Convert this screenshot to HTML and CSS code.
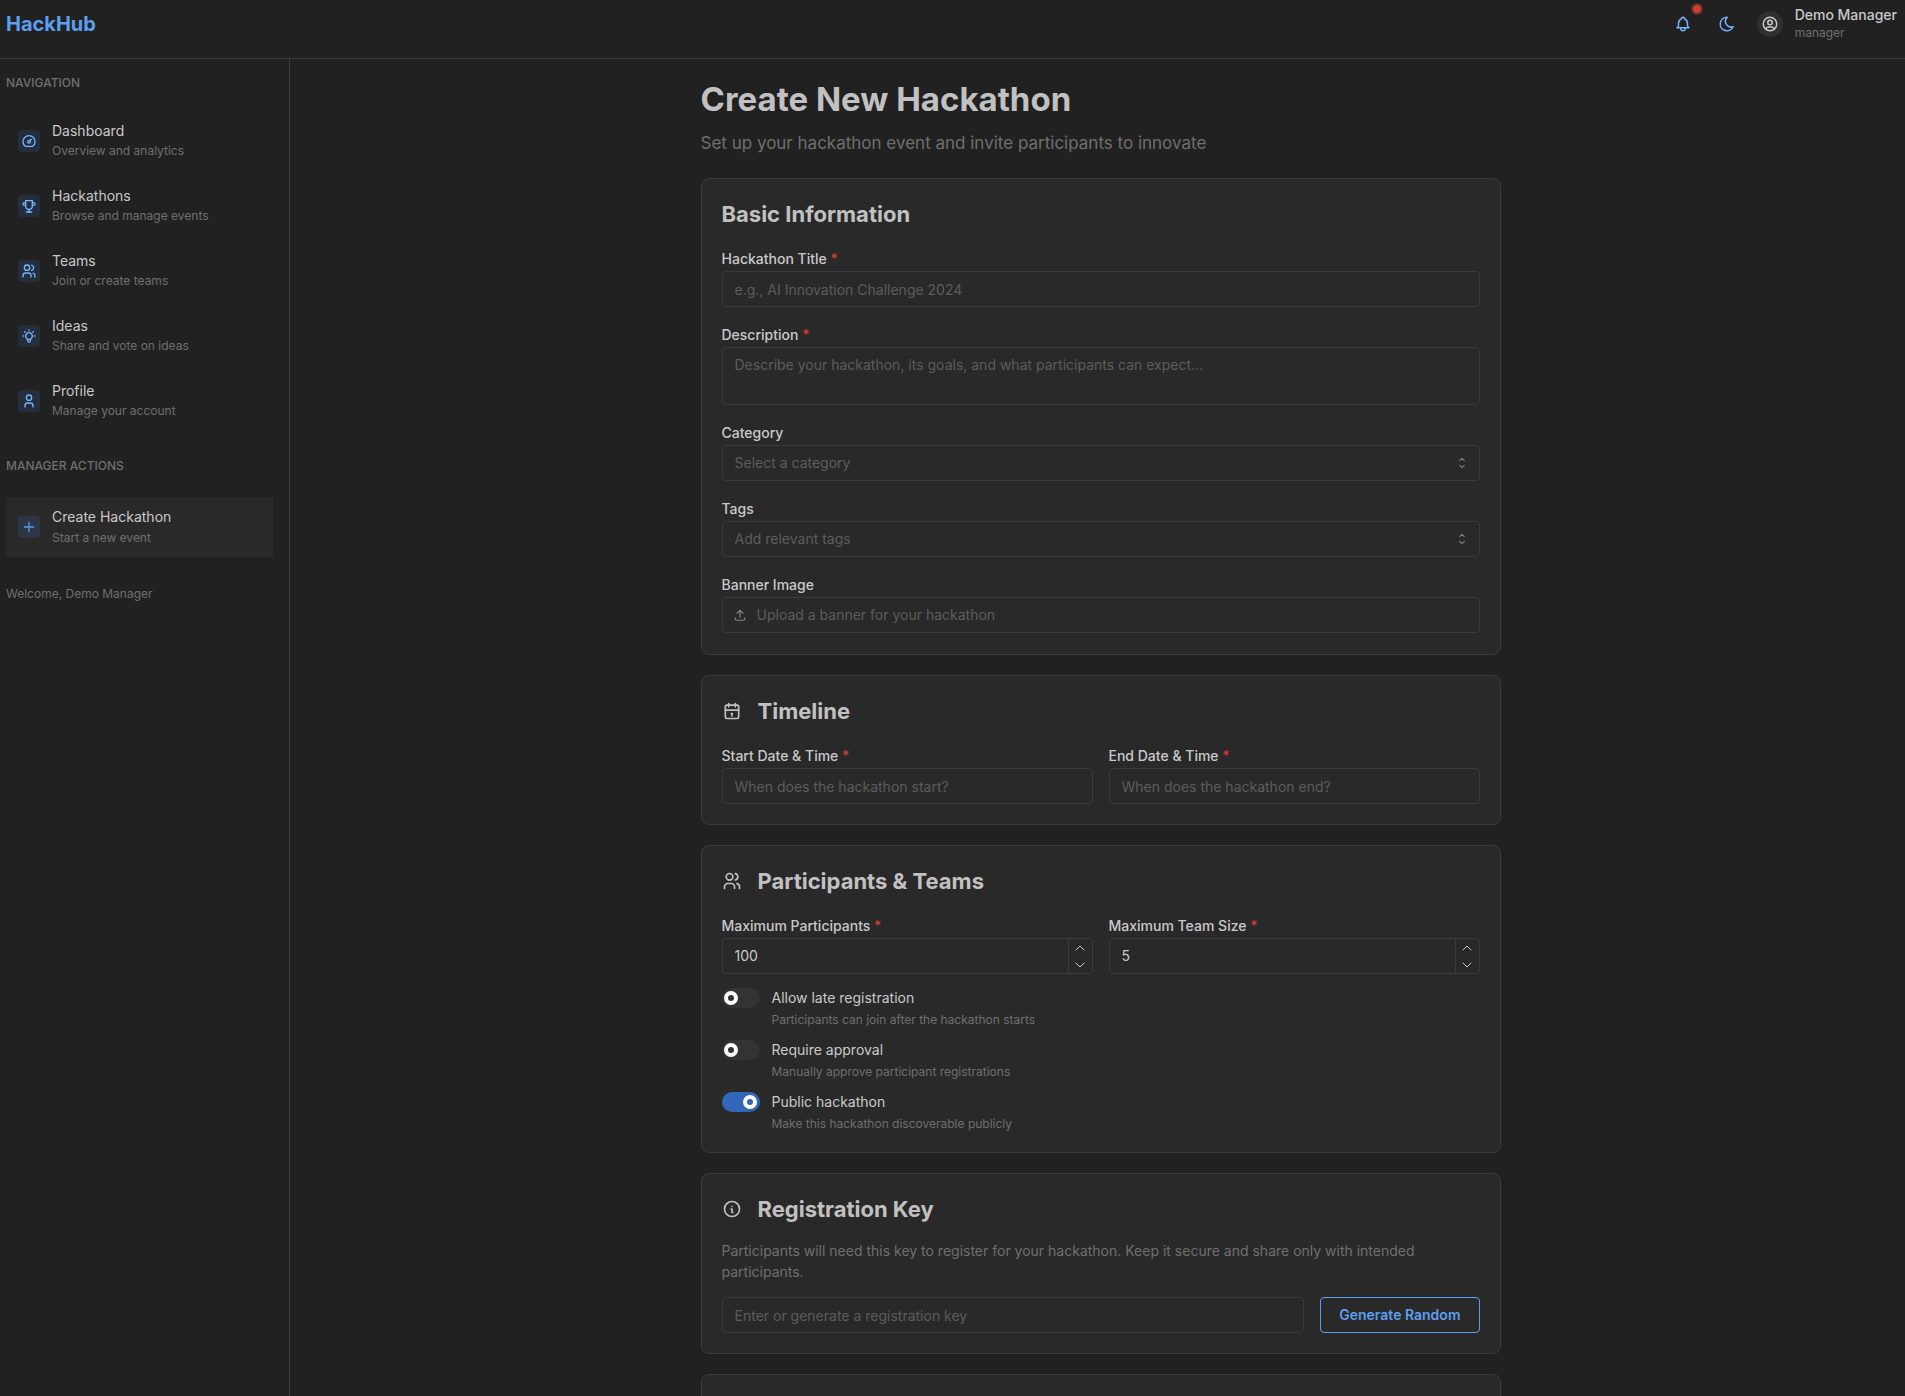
FILE: index.html
```html
<!DOCTYPE html>
<html lang="en">
<head>
<meta charset="utf-8">
<meta name="viewport" content="width=device-width, initial-scale=1">
<title>Create New Hackathon - HackHub</title>
<link rel="stylesheet" href="styles.css">
</head>
<body>
<svg class="sprite" aria-hidden="true">
  <symbol id="bell" viewBox="0 0 24 24"><path d="M10 5a2 2 0 1 1 4 0a7 7 0 0 1 4 6v3a4 4 0 0 0 2 3h-16a4 4 0 0 0 2 -3v-3a7 7 0 0 1 4 -6"/><path d="M9 17v1a3 3 0 0 0 6 0v-1"/></symbol>
  <symbol id="moon" viewBox="0 0 24 24"><path d="M12 3c.132 0 .263 0 .393 0a7.5 7.5 0 0 0 7.92 12.446a9 9 0 1 1 -8.313 -12.454z"/></symbol>
  <symbol id="user-circle" viewBox="0 0 24 24"><circle cx="12" cy="12" r="9"/><circle cx="12" cy="10" r="3"/><path d="M6.168 18.849a4 4 0 0 1 3.832 -2.849h4a4 4 0 0 1 3.834 2.855"/></symbol>
  <symbol id="dashboard" viewBox="0 0 24 24"><circle cx="12" cy="13" r="2"/><path d="M13.45 11.55l2.05 -2.05"/><path d="M6.4 20a9 9 0 1 1 11.2 0z"/></symbol>
  <symbol id="trophy" viewBox="0 0 24 24"><path d="M8 21h8"/><path d="M12 17v4"/><path d="M7 4h10"/><path d="M17 4v8a5 5 0 0 1 -10 0v-8"/><circle cx="5" cy="9" r="2"/><circle cx="19" cy="9" r="2"/></symbol>
  <symbol id="users" viewBox="0 0 24 24"><circle cx="9" cy="7" r="4"/><path d="M3 21v-2a4 4 0 0 1 4 -4h4a4 4 0 0 1 4 4v2"/><path d="M16 3.13a4 4 0 0 1 0 7.75"/><path d="M21 21v-2a4 4 0 0 0 -3 -3.85"/></symbol>
  <symbol id="bulb" viewBox="0 0 24 24"><path d="M3 12h1m8 -9v1m8 8h1m-15.4 -6.4l.7 .7m12.1 -.7l-.7 .7"/><path d="M9 16a5 5 0 1 1 6 0a3.5 3.5 0 0 0 -1 3a2 2 0 0 1 -4 0a3.5 3.5 0 0 0 -1 -3"/><path d="M9.7 17h4.6"/></symbol>
  <symbol id="user" viewBox="0 0 24 24"><circle cx="12" cy="7" r="4"/><path d="M6 21v-2a4 4 0 0 1 4 -4h4a4 4 0 0 1 4 4v2"/></symbol>
  <symbol id="plus" viewBox="0 0 24 24"><path d="M12 5v14"/><path d="M5 12h14"/></symbol>
  <symbol id="upload" viewBox="0 0 24 24"><path d="M4 17v2a2 2 0 0 0 2 2h12a2 2 0 0 0 2 -2v-2"/><path d="M7 9l5 -5l5 5"/><path d="M12 4v12"/></symbol>
  <symbol id="selector" viewBox="0 0 24 24"><path d="M8 8l4 -4l4 4"/><path d="M16 16l-4 4l-4 -4"/></symbol>
  <symbol id="calendar" viewBox="0 0 24 24"><rect x="4" y="5" width="16" height="16" rx="2"/><path d="M16 3v4"/><path d="M8 3v4"/><path d="M4 11h16"/><path d="M11 15h1"/><path d="M12 15v3"/></symbol>
  <symbol id="info" viewBox="0 0 24 24"><circle cx="12" cy="12" r="9"/><path d="M12 9h.01"/><path d="M11 12h1v4h1"/></symbol>
  <symbol id="up" viewBox="0 0 24 24"><path d="M4 16l8 -8l8 8"/></symbol>
  <symbol id="down" viewBox="0 0 24 24"><path d="M4 8l8 8l8 -8"/></symbol>
</svg>

<header class="topbar">
  <a class="logo" href="#">HackHub</a>
  <div class="topbar-actions">
    <button class="icon-button" type="button" aria-label="Notifications">
      <svg class="icon icon-md"><use href="#bell"/></svg>
      <span class="badge"></span>
    </button>
    <button class="icon-button" type="button" aria-label="Toggle color scheme">
      <svg class="icon icon-md"><use href="#moon"/></svg>
    </button>
    <button class="account" type="button">
      <span class="avatar"><svg class="icon icon-md"><use href="#user-circle"/></svg></span>
      <span class="account-text">
        <span class="account-name">Demo Manager</span>
        <span class="account-role">manager</span>
      </span>
    </button>
  </div>
</header>

<div class="shell">
  <aside class="sidebar">
    <h2 class="nav-heading">NAVIGATION</h2>
    <nav class="nav-list" aria-label="Main">
      <a class="nav-link" href="#"><span class="nav-icon"><svg class="icon icon-sm"><use href="#dashboard"/></svg></span><span class="nav-text"><span class="nav-label">Dashboard</span><span class="nav-note">Overview and analytics</span></span></a>
      <a class="nav-link" href="#"><span class="nav-icon"><svg class="icon icon-sm"><use href="#trophy"/></svg></span><span class="nav-text"><span class="nav-label">Hackathons</span><span class="nav-note">Browse and manage events</span></span></a>
      <a class="nav-link" href="#"><span class="nav-icon"><svg class="icon icon-sm"><use href="#users"/></svg></span><span class="nav-text"><span class="nav-label">Teams</span><span class="nav-note">Join or create teams</span></span></a>
      <a class="nav-link" href="#"><span class="nav-icon"><svg class="icon icon-sm"><use href="#bulb"/></svg></span><span class="nav-text"><span class="nav-label">Ideas</span><span class="nav-note">Share and vote on ideas</span></span></a>
      <a class="nav-link" href="#"><span class="nav-icon"><svg class="icon icon-sm"><use href="#user"/></svg></span><span class="nav-text"><span class="nav-label">Profile</span><span class="nav-note">Manage your account</span></span></a>
    </nav>
    <h2 class="nav-heading">MANAGER ACTIONS</h2>
    <nav class="nav-list manager-list" aria-label="Manager actions">
      <a class="nav-link active" href="#" aria-current="page"><span class="nav-icon"><svg class="icon icon-sm"><use href="#plus"/></svg></span><span class="nav-text"><span class="nav-label">Create Hackathon</span><span class="nav-note">Start a new event</span></span></a>
    </nav>
    <p class="welcome">Welcome, Demo Manager</p>
  </aside>

  <main class="main">
    <div class="container">
      <div class="page-head">
        <h1 class="page-title">Create New Hackathon</h1>
        <p class="page-subtitle">Set up your hackathon event and invite participants to innovate</p>
      </div>
      <form class="cards">
        <section class="card">
          <h3 class="card-title">Basic Information</h3>
          <div class="fields">
            <div class="field">
              <label class="label" for="title">Hackathon Title <span class="required">*</span></label>
              <input class="input" id="title" type="text" placeholder="e.g., AI Innovation Challenge 2024">
            </div>
            <div class="field">
              <label class="label" for="description">Description <span class="required">*</span></label>
              <textarea class="input textarea" id="description" placeholder="Describe your hackathon, its goals, and what participants can expect..."></textarea>
            </div>
            <div class="field">
              <label class="label" for="category">Category</label>
              <div class="select-wrap">
                <select class="input select" id="category"><option>Select a category</option></select>
                <svg class="icon select-icon"><use href="#selector"/></svg>
              </div>
            </div>
            <div class="field">
              <label class="label" for="tags">Tags</label>
              <div class="select-wrap">
                <select class="input select" id="tags"><option>Add relevant tags</option></select>
                <svg class="icon select-icon"><use href="#selector"/></svg>
              </div>
            </div>
            <div class="field">
              <label class="label" for="banner">Banner Image</label>
              <button class="input upload" id="banner" type="button"><svg class="icon upload-icon"><use href="#upload"/></svg>Upload a banner for your hackathon</button>
            </div>
          </div>
        </section>

        <section class="card">
          <h3 class="card-title"><svg class="icon icon-lg"><use href="#calendar"/></svg>Timeline</h3>
          <div class="columns">
            <div class="field">
              <label class="label" for="start">Start Date &amp; Time <span class="required">*</span></label>
              <input class="input" id="start" type="text" placeholder="When does the hackathon start?">
            </div>
            <div class="field">
              <label class="label" for="end">End Date &amp; Time <span class="required">*</span></label>
              <input class="input" id="end" type="text" placeholder="When does the hackathon end?">
            </div>
          </div>
        </section>

        <section class="card">
          <h3 class="card-title"><svg class="icon icon-lg"><use href="#users"/></svg>Participants &amp; Teams</h3>
          <div class="columns">
            <div class="field">
              <label class="label" for="participants">Maximum Participants <span class="required">*</span></label>
              <div class="input number">
                <input class="number-value" id="participants" type="number" value="100">
                <div class="stepper">
                  <button class="step" type="button" aria-label="Increase participants"><svg class="icon step-icon"><use href="#up"/></svg></button>
                  <button class="step" type="button" aria-label="Decrease participants"><svg class="icon step-icon"><use href="#down"/></svg></button>
                </div>
              </div>
            </div>
            <div class="field">
              <label class="label" for="team-size">Maximum Team Size <span class="required">*</span></label>
              <div class="input number">
                <input class="number-value" id="team-size" type="number" value="5">
                <div class="stepper">
                  <button class="step" type="button" aria-label="Increase team size"><svg class="icon step-icon"><use href="#up"/></svg></button>
                  <button class="step" type="button" aria-label="Decrease team size"><svg class="icon step-icon"><use href="#down"/></svg></button>
                </div>
              </div>
            </div>
          </div>
          <div class="switches">
            <label class="switch-row"><input class="switch" type="checkbox"><span class="switch-text"><span class="switch-label">Allow late registration</span><span class="switch-note">Participants can join after the hackathon starts</span></span></label>
            <label class="switch-row"><input class="switch" type="checkbox"><span class="switch-text"><span class="switch-label">Require approval</span><span class="switch-note">Manually approve participant registrations</span></span></label>
            <label class="switch-row"><input class="switch" type="checkbox" checked><span class="switch-text"><span class="switch-label">Public hackathon</span><span class="switch-note">Make this hackathon discoverable publicly</span></span></label>
          </div>
        </section>

        <section class="card">
          <h3 class="card-title tight"><svg class="icon icon-lg"><use href="#info"/></svg>Registration Key</h3>
          <p class="hint">Participants will need this key to register for your hackathon. Keep it secure and share only with intended participants.</p>
          <div class="key-row">
            <input class="input" type="text" aria-label="Registration key" placeholder="Enter or generate a registration key">
            <button class="outline-button" type="button">Generate Random</button>
          </div>
        </section>

        <section class="card"></section>
      </form>
    </div>
  </main>
</div>
</body>
</html>
```
FILE: styles.css
```css
:root {
  --bg: #212121;
  --card: #292929;
  --line: #3b3b3b;
  --text: #c9c9c9;
  --heading: #c1c1c1;
  --dim: #6f6f6f;
  --placeholder: #5c5c5c;
  --blue: #5c9ff0;
  --light-blue: #74b4ff;
  --red: #d23c2e;
}

*, *::before { box-sizing: border-box; }

html, body { height: 100%; }

body {
  margin: 0;
  display: flex;
  flex-direction: column;
  overflow: hidden;
  background: var(--bg);
  color: var(--text);
  font-family: Inter, "Liberation Sans", sans-serif;
  font-size: 14px;
  line-height: 20px;
}

h1, h2, h3, p { margin: 0; }
a { color: inherit; text-decoration: none; }
button, input, select, textarea { font: inherit; color: inherit; margin: 0; }
button { padding: 0; border: 0; background: none; cursor: pointer; }

.sprite { display: none; }
.icon {
  display: block;
  flex: none;
  fill: none;
  stroke: currentColor;
  stroke-width: 2;
  stroke-linecap: round;
  stroke-linejoin: round;
}
.icon-sm { width: 16px; height: 16px; }
.icon-md { width: 18px; height: 18px; }
.icon-lg { width: 20px; height: 20px; }

/* Header */
.topbar {
  flex: none;
  height: 59px;
  display: flex;
  justify-content: space-between;
  align-items: flex-start;
  padding: 6px 8px 0 6px;
  border-bottom: 1px solid var(--line);
}
.logo {
  color: var(--blue);
  font-size: 20px;
  font-weight: 700;
  line-height: 36px;
}
.topbar-actions { display: flex; align-items: center; gap: 16px; }
.icon-button {
  position: relative;
  width: 28px;
  height: 36px;
  display: grid;
  place-items: center;
  color: var(--light-blue);
}
.badge {
  position: absolute;
  top: -3px;
  right: -6px;
  width: 12px;
  height: 12px;
  border: 2px solid #56302d;
  border-radius: 50%;
  background: var(--red);
}
.account { display: flex; align-items: center; gap: 12px; text-align: left; }
.avatar {
  width: 26px;
  height: 26px;
  display: grid;
  place-items: center;
  border-radius: 50%;
  background: #2f3032;
}
.account-text { display: flex; flex-direction: column; }
.account-name { font-weight: 500; line-height: 18px; }
.account-role { color: var(--dim); font-size: 12px; line-height: 18px; }

/* Sidebar */
.shell { flex: 1; min-height: 0; display: flex; }
.sidebar {
  flex: none;
  width: 290px;
  padding: 14px 16px 0 6px;
  border-right: 1px solid var(--line);
}
.nav-heading {
  color: var(--dim);
  font-size: 12px;
  font-weight: 500;
  line-height: 20px;
}
.nav-list {
  display: flex;
  flex-direction: column;
  gap: 7px;
  padding: 19px 0 26px;
}
.manager-list { padding: 21px 0 27px; }
.nav-link {
  display: flex;
  align-items: center;
  gap: 12px;
  padding: 9px 12px;
}
.nav-icon {
  width: 22px;
  height: 22px;
  display: grid;
  place-items: center;
  border-radius: 4px;
  background: #252e3c;
  color: var(--light-blue);
}
.nav-text { display: flex; flex-direction: column; }
.nav-label { line-height: 20px; }
.nav-note { color: var(--dim); font-size: 12px; line-height: 20px; }
.nav-link.active { background: var(--card); }
.active .nav-icon { background: #2c3644; color: #5f98da; }
.active .nav-label { line-height: 22px; }
.welcome { color: var(--dim); font-size: 12px; }

/* Page */
.main { flex: 1; min-width: 0; padding: 20px 0 0 6px; }
.container { max-width: 800px; margin: 0 auto; }
.page-head { padding-bottom: 21px; }
.page-title {
  color: var(--heading);
  font-size: 33px;
  font-weight: 700;
  line-height: 40px;
}
.page-subtitle {
  padding-top: 10px;
  color: var(--dim);
  font-size: 17px;
  line-height: 28px;
}
.cards { display: flex; flex-direction: column; gap: 20px; }
.card {
  padding: 20px;
  border: 1px solid var(--line);
  border-radius: 8px;
  background: var(--card);
}
.card-title {
  display: flex;
  align-items: center;
  gap: 16px;
  padding-bottom: 20px;
  color: var(--heading);
  font-size: 22px;
  font-weight: 700;
  line-height: 30px;
}
.card-title.tight { padding-bottom: 16px; }

/* Fields */
.fields { display: flex; flex-direction: column; gap: 18px; padding-bottom: 1px; }
.columns { display: grid; grid-template-columns: 1fr 1fr; gap: 16px; }
.field { display: flex; flex-direction: column; gap: 2px; min-width: 0; }
.label { font-weight: 500; line-height: 20px; }
.required { color: var(--red); }
.input {
  display: block;
  width: 100%;
  height: 36px;
  padding: 0 12px;
  border: 1px solid var(--line);
  border-radius: 4px;
  background: var(--card);
  outline: none;
}
.input::placeholder { color: var(--placeholder); opacity: 1; }
.textarea { height: 58px; padding-top: 7px; resize: none; }
.select-wrap { display: grid; align-items: center; }
.select-wrap > * { grid-area: 1 / 1; }
.select { appearance: none; color: var(--placeholder); }
.select-icon {
  justify-self: end;
  width: 14px;
  height: 14px;
  margin-right: 11px;
  color: #7c7c7c;
  pointer-events: none;
}
.upload {
  display: flex;
  align-items: center;
  gap: 10px;
  padding: 0 10px;
  color: var(--placeholder);
}
.upload-icon { width: 14px; height: 14px; color: #828282; }

.number { display: flex; padding: 0; overflow: hidden; }
.number-value {
  flex: 1;
  min-width: 0;
  padding: 0 12px;
  border: 0;
  background: none;
  outline: none;
  appearance: textfield;
}
.number-value::-webkit-inner-spin-button { appearance: none; margin: 0; }
.stepper {
  width: 24px;
  display: grid;
  grid-template-rows: 1fr 1fr;
  border-left: 1px solid var(--line);
}
.step { display: grid; place-items: center; }
.step-icon { width: 12px; height: 12px; }

/* Switches */
.switches { display: flex; flex-direction: column; gap: 12px; padding-top: 14px; }
.switch-row { display: flex; align-items: flex-start; gap: 12px; }
.switch {
  appearance: none;
  flex: none;
  display: flex;
  align-items: center;
  width: 38px;
  height: 20px;
  padding: 0 2px;
  border-radius: 10px;
  background: #333;
}
.switch::before {
  content: "";
  width: 14px;
  height: 14px;
  border: 4px solid #fff;
  border-radius: 50%;
}
.switch:checked { justify-content: flex-end; padding-right: 3px; background: #3266b8; }
.switch-text { display: flex; flex-direction: column; gap: 4px; }
.switch-note { color: var(--dim); font-size: 12px; line-height: 16px; }

/* Registration key */
.hint { padding-bottom: 15px; color: var(--dim); line-height: 21px; }
.key-row { display: flex; gap: 16px; }
.key-row .input { flex: 1; min-width: 0; }
.outline-button {
  flex: none;
  height: 36px;
  padding: 0 18px;
  border: 1px solid var(--blue);
  border-radius: 4px;
  color: var(--blue);
  font-weight: 600;
}
```
